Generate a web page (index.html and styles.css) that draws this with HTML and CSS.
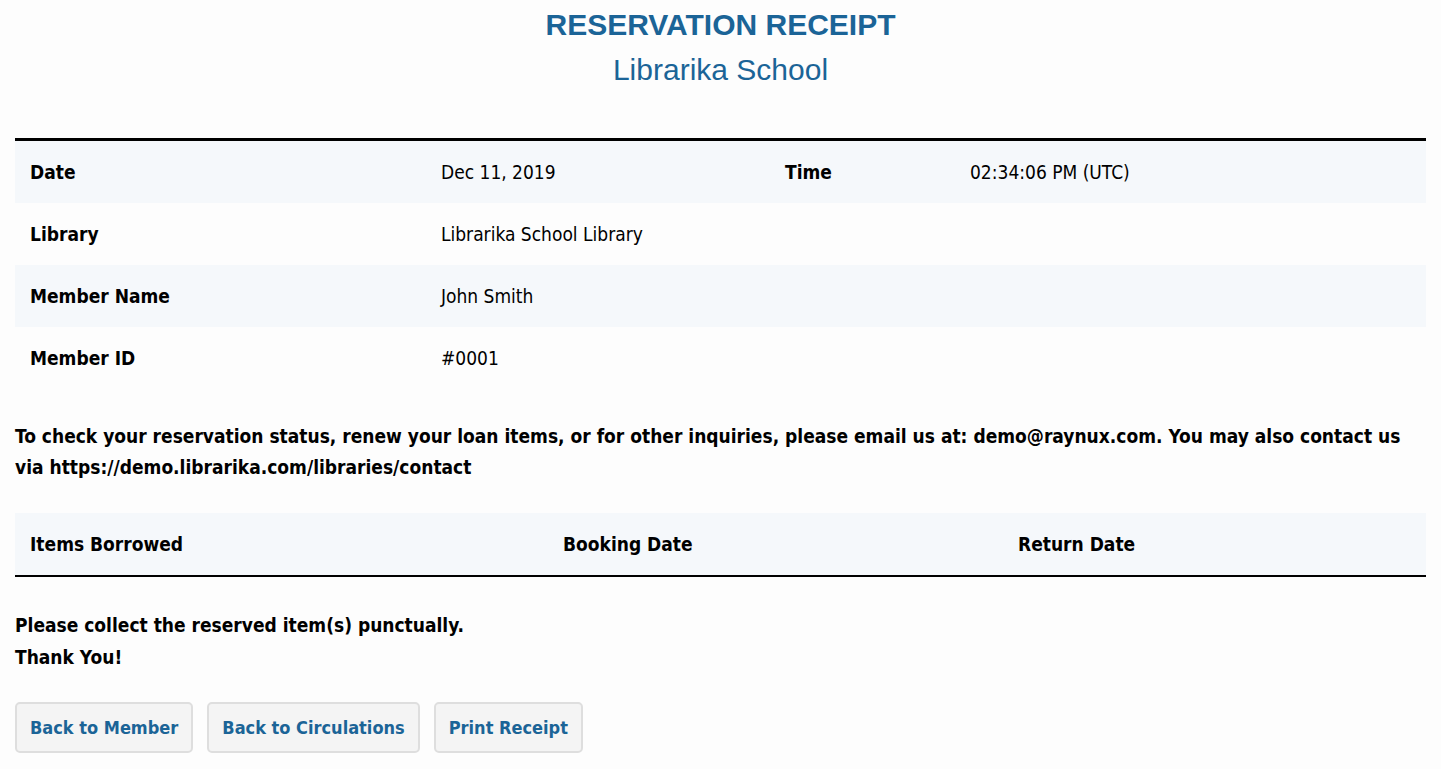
FILE: index.html
```html
<!DOCTYPE html>
<html>
<head>
    <meta charset="UTF-8">
    <title>Reservation Receipt</title>
    <link rel="stylesheet" href="styles.css">
</head>
<body>

<div class="receipt">
    <div class="receipt-head">
        <h1>RESERVATION RECEIPT</h1>
        <h2>Librarika School</h2>
    </div>

    <table class="info-table">
        <tr>
            <th class="col-label">Date</th>
            <td class="col-value">Dec 11, 2019</td>
            <th class="col-label2">Time</th>
            <td>02:34:06 PM (UTC)</td>
        </tr>
        <tr>
            <th>Library</th>
            <td colspan="3">Librarika School Library</td>
        </tr>
        <tr>
            <th>Member Name</th>
            <td colspan="3">John Smith</td>
        </tr>
        <tr>
            <th>Member ID</th>
            <td colspan="3">#0001</td>
        </tr>
    </table>

    <p class="notice">To check your reservation status, renew your loan items, or for other inquiries, please email us at: demo@raynux.com. You may also contact us via https://demo.librarika.com/libraries/contact</p>

    <table class="items-table">
        <thead>
            <tr>
                <th class="col-item">Items Borrowed</th>
                <th class="col-booking">Booking Date</th>
                <th>Return Date</th>
            </tr>
        </thead>
    </table>

    <p class="thanks">Please collect the reserved item(s) punctually.<br>Thank You!</p>

    <div class="actions">
        <a class="btn" href="#">Back to Member</a>
        <a class="btn" href="#">Back to Circulations</a>
        <a class="btn" href="#">Print Receipt</a>
    </div>
</div>

</body>
</html>
```

FILE: styles.css
```css
body {
    margin: 0;
    background: #fdfdfd;
    color: #000;
    font-family: "DejaVu Sans Condensed", "DejaVu Sans", sans-serif;
    font-size: 19px;
}
.receipt {
    padding: 0 15px;
}
.receipt-head {
    text-align: center;
    color: #1b6497;
    font-family: "Liberation Sans", Arial, sans-serif;
    padding-top: 6px;
    margin-bottom: 42px;
}
.receipt-head h1 {
    margin: 0;
    font-size: 30px;
    line-height: 38px;
}
.receipt-head h2 {
    margin: 0;
    font-weight: normal;
    font-size: 30px;
    line-height: 52px;
}
table {
    width: 100%;
    border-collapse: collapse;
}
th, td {
    text-align: left;
    padding: 0 15px;
    height: 62px;
}
th {
    font-weight: bold;
}
.info-table {
    border-top: 3px solid #000;
}
.info-table tr:nth-child(odd) {
    background: #f5f8fb;
}
.col-label {
    width: 381px;
}
.col-value {
    width: 314px;
}
.col-label2 {
    width: 155px;
}
.notice {
    font-weight: bold;
    line-height: 31px;
    margin: 32px 0 30px;
}
.items-table thead tr {
    background: #f5f8fb;
    border-bottom: 2px solid #000;
}
.col-item {
    width: 503px;
}
.col-booking {
    width: 425px;
}
.thanks {
    font-weight: bold;
    line-height: 32px;
    margin: 32px 0 29px;
}
.actions {
    display: flex;
    gap: 14px;
}
.btn {
    padding: 0 13px;
    line-height: 47px;
    background: #f4f4f4;
    border: 2px solid #dedede;
    border-radius: 5px;
    color: #1b6497;
    font-weight: bold;
    font-size: 18px;
    text-decoration: none;
}
```
